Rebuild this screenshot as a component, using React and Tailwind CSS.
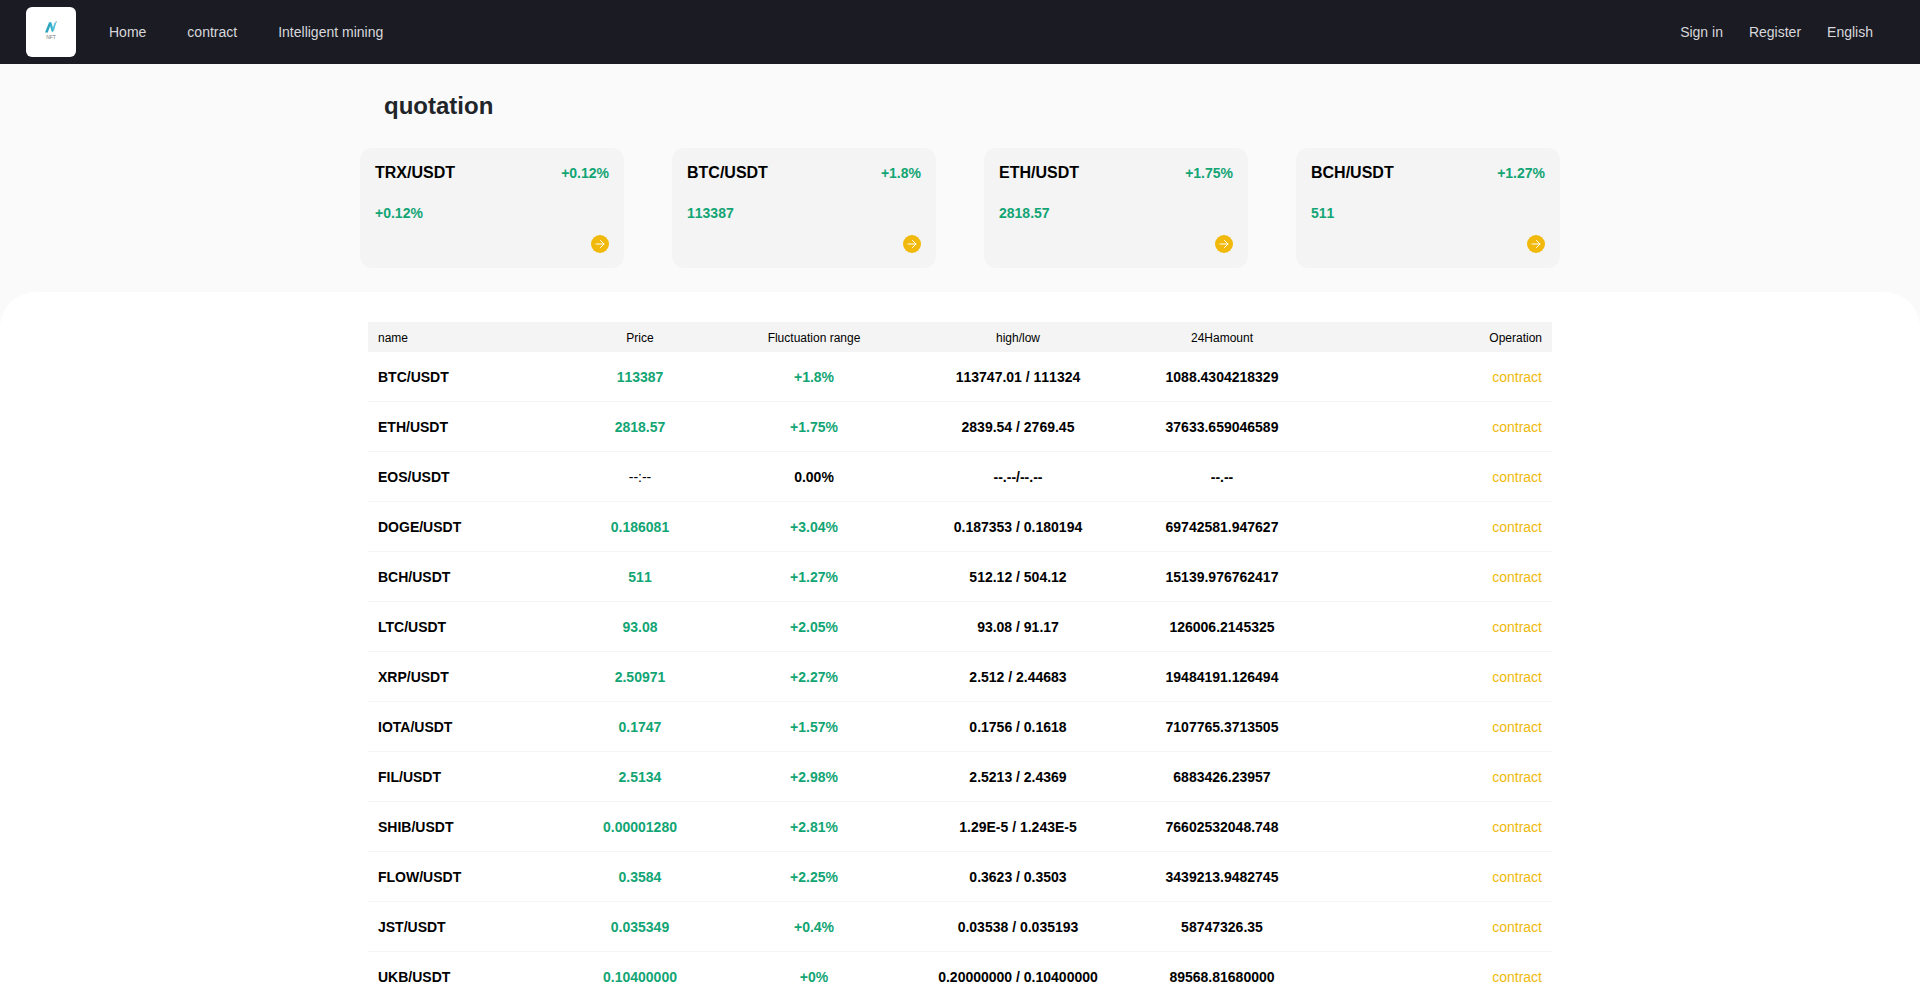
const rows = [
  ["BTC/USDT", "113387", "+1.8%", "113747.01 / 111324", "1088.4304218329"],
  ["ETH/USDT", "2818.57", "+1.75%", "2839.54 / 2769.45", "37633.659046589"],
  ["EOS/USDT", "--:--", "0.00%", "--.--/--.--", "--.--", true],
  ["DOGE/USDT", "0.186081", "+3.04%", "0.187353 / 0.180194", "69742581.947627"],
  ["BCH/USDT", "511", "+1.27%", "512.12 / 504.12", "15139.976762417"],
  ["LTC/USDT", "93.08", "+2.05%", "93.08 / 91.17", "126006.2145325"],
  ["XRP/USDT", "2.50971", "+2.27%", "2.512 / 2.44683", "19484191.126494"],
  ["IOTA/USDT", "0.1747", "+1.57%", "0.1756 / 0.1618", "7107765.3713505"],
  ["FIL/USDT", "2.5134", "+2.98%", "2.5213 / 2.4369", "6883426.23957"],
  ["SHIB/USDT", "0.00001280", "+2.81%", "1.29E-5 / 1.243E-5", "76602532048.748"],
  ["FLOW/USDT", "0.3584", "+2.25%", "0.3623 / 0.3503", "3439213.9482745"],
  ["JST/USDT", "0.035349", "+0.4%", "0.03538 / 0.035193", "58747326.35"],
  ["UKB/USDT", "0.10400000", "+0%", "0.20000000 / 0.10400000", "89568.81680000"],
];

const cards = [
  ["TRX/USDT", "+0.12%", "+0.12%"],
  ["BTC/USDT", "+1.8%", "113387"],
  ["ETH/USDT", "+1.75%", "2818.57"],
  ["BCH/USDT", "+1.27%", "511"],
];

const gridCols = "grid grid-cols-[192px_160px_188px_220px_188px_236px] items-center";

function Logo() {
  return (
    <div className="w-[50px] h-[50px] bg-white rounded-md flex flex-col items-center pt-[14px]">
      <svg width="12" height="12" viewBox="0 0 12 12">
        <path d="M0 11.5 L4 1.5 L6.4 1.5 L2.8 11.5 Z" fill="#2aa3c2" />
        <path d="M4 1.5 L6.4 1.5 L8.6 9.5 L7 11.5 Z" fill="#2fb1c8" />
        <path d="M7.4 8 L9.4 2 L11.4 1 L8.8 10.5 Z" fill="#5cc0d6" />
        <circle cx="11.2" cy="0.9" r="0.8" fill="#a4bccb" />
      </svg>
      <span className="text-[5px] leading-[5px] mt-[2px] text-[#777]">NFT</span>
    </div>
  );
}

export default function App() {
  return (
    <div className="font-['Liberation_Sans',Arial,sans-serif] bg-[#fafafa] h-screen overflow-hidden">
      <header className="h-16 bg-[#1a1b23] flex items-center justify-between pl-[26px] pr-[47px] text-sm text-[#d8d8dc]">
        <div className="flex items-center">
          <Logo />
          <nav className="flex items-center gap-[41px] ml-[33px]">
            <a>Home</a>
            <a>contract</a>
            <a>Intelligent mining</a>
          </nav>
        </div>
        <div className="flex items-center gap-[26px]">
          <a>Sign in</a>
          <a>Register</a>
          <a>English</a>
        </div>
      </header>

      <section className="w-[1200px] mx-auto pt-[26px] pb-6">
        <h1 className="text-2xl font-bold text-[#212529] pl-6">quotation</h1>
        <div className="flex justify-between mt-[26px]">
          {cards.map(([name, pct, val]) => (
            <div key={name} className="w-[264px] h-[120px] bg-[#f4f4f4] rounded-xl px-[15px] pt-[15px]">
              <div className="flex items-center justify-between h-5">
                <span className="text-base font-bold text-black">{name}</span>
                <span className="text-sm font-bold text-[#12a574]">{pct}</span>
              </div>
              <div className="mt-[20px] text-sm font-bold text-[#12a574] leading-5 [font-kerning:none]">{val}</div>
              <div className="flex justify-end mt-3">
                <span className="w-[18px] h-[18px] rounded-full bg-[#f0b90b] flex items-center justify-center">
                  <svg width="10" height="10" viewBox="0 0 10 10" fill="none" stroke="#fff" strokeWidth="1" strokeLinecap="round" strokeLinejoin="round">
                    <path d="M1 5 H9 M5.5 1.5 L9 5 L5.5 8.5" />
                  </svg>
                </span>
              </div>
            </div>
          ))}
        </div>
      </section>

      <main className="bg-white rounded-t-[36px] pt-[30px]">
        <div className="w-[1184px] mx-auto">
          <div className={`${gridCols} h-[30px] bg-[#f4f4f4] text-xs text-black pt-[2px]`}>
            <div className="pl-[10px]">name</div>
            <div className="text-center">Price</div>
            <div className="text-center">Fluctuation range</div>
            <div className="text-center">high/low</div>
            <div className="text-center">24Hamount</div>
            <div className="text-right pr-[10px]">Operation</div>
          </div>
          {rows.map(([name, price, pct, hl, amount, flat]) => (
            <div key={name} className={`${gridCols} h-[50px] border-b border-[#f5f5f5] text-sm`}>
              <div className="pl-[10px] font-bold text-black">{name}</div>
              <div className={flat ? "text-center text-black" : "text-center font-bold text-[#12a574] [font-kerning:none]"}>{price}</div>
              <div className={flat ? "text-center font-bold text-black" : "text-center font-bold text-[#12a574]"}>{pct}</div>
              <div className="text-center font-bold text-black [font-kerning:none]">{hl}</div>
              <div className="text-center font-bold text-black">{amount}</div>
              <div className="text-right pr-[10px] text-[#f0b90b]">contract</div>
            </div>
          ))}
        </div>
      </main>
    </div>
  );
}
